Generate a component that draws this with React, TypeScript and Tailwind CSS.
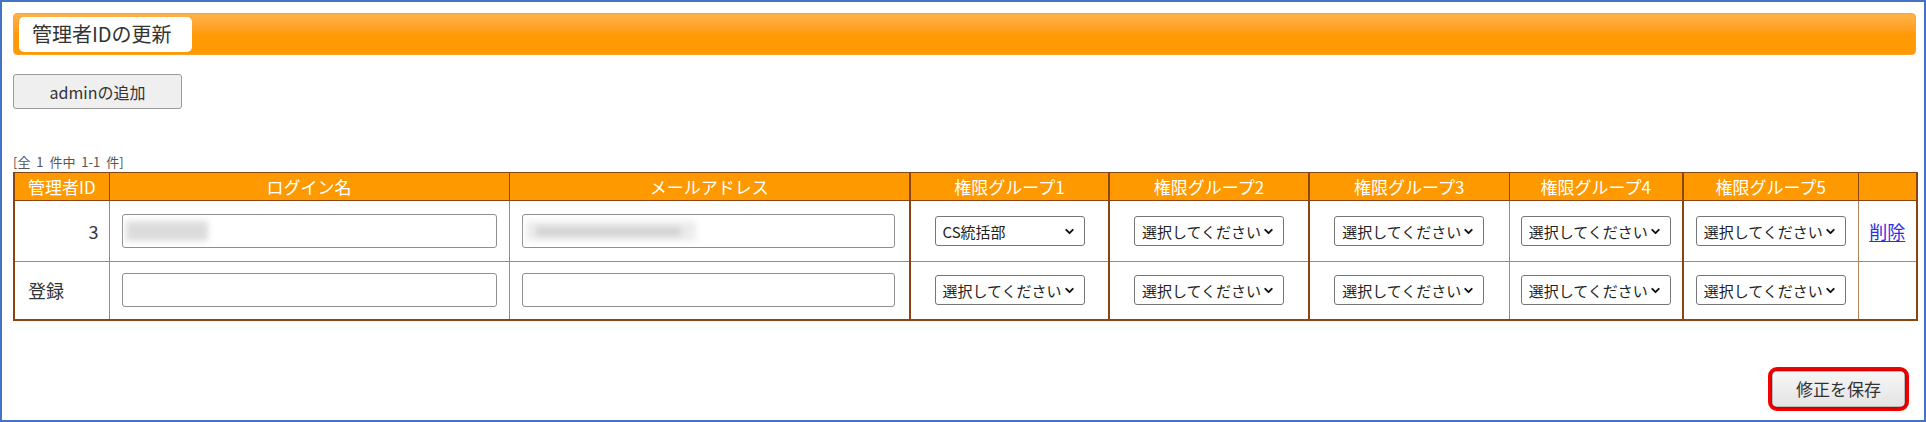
import { ChevronDown } from "lucide-react";

const FONT = "font-['Noto_Sans_CJK_JP','Noto_Sans',sans-serif]";

// column widths in px, left to right
const COLS = [95, 400, 401, 199, 200, 200, 174, 175, 59];

// columns whose left edge is drawn with the heavy rule
const HEAVY = [false, false, false, true, true, true, false, true, false];

const HEADERS = [
  "管理者ID",
  "ログイン名",
  "メールアドレス",
  "権限グループ1",
  "権限グループ2",
  "権限グループ3",
  "権限グループ4",
  "権限グループ5",
  "",
];

function GroupSelect({ value }: { value: string }) {
  return (
    <div className="mx-auto flex h-[30px] w-[150px] items-center justify-between rounded-[3px] border border-[#767676] bg-white pl-[7px] pr-[8px] text-[15px] leading-none text-[#222]">
      <span className="whitespace-nowrap">{value}</span>
      <ChevronDown className="h-[13px] w-[13px] shrink-0 text-[#111]" strokeWidth={3.5} />
    </div>
  );
}

function TextBox({ masked }: { masked?: "short" | "long" }) {
  return (
    <div className="flex h-[34px] w-full items-center rounded-[3px] border border-[#8f8f8f] bg-white px-[3px]">
      {masked === "short" && (
        <span className="h-[20px] w-[82px] bg-[#dcdcdc] blur-[3px]" />
      )}
      {masked === "long" && (
        <span className="flex h-[20px] w-[170px] items-center bg-[#ececec] blur-[3px]">
          <span className="ml-[10px] h-[9px] w-[145px] bg-[#d2d2d2]" />
        </span>
      )}
    </div>
  );
}

function cellBorder(i: number) {
  return HEAVY[i]
    ? "border border-[#b08563] border-l-2 border-l-[#8b4513]"
    : "border border-[#b08563]";
}

export default function App() {
  const groups1 = ["CS統括部", "選択してください", "選択してください", "選択してください", "選択してください"];
  const groups2 = ["選択してください", "選択してください", "選択してください", "選択してください", "選択してください"];

  return (
    <div
      className={`flex h-[422px] w-[1926px] flex-col border-2 border-[#4472c4] bg-white pl-[11px] pr-[8px] pt-[11px] text-[#333] ${FONT}`}
    >
      {/* page title bar */}
      <div className="flex h-[42px] items-center rounded-[4px] border border-[#ffa42a] bg-linear-to-b from-[#ffb347] via-[#ff9a08] to-[#ff9900] pl-[5px]">
        <div className="flex h-[35px] w-[173px] items-center rounded-[5px] bg-white pl-[13px] text-[20px] leading-none text-[#333]">
          管理者IDの更新
        </div>
      </div>

      <button className="mt-[19px] flex h-[35px] w-[169px] items-center justify-center rounded-[3px] border border-[#9a9a9a] bg-[#efefef] text-[16px] leading-none text-[#333]">
        adminの追加
      </button>

      <div className="mt-[44px] text-[13px] leading-[17px] text-[#555] [word-spacing:3px]">
        [全 1 件中 1-1 件]
      </div>

      <table className="mt-[2px] w-[1903px] table-fixed border-collapse border-2 border-t border-[#8b4513] border-t-[#a0522d]">
        <colgroup>
          {COLS.map((w, i) => (
            <col key={i} style={{ width: w }} />
          ))}
        </colgroup>
        <thead>
          <tr className="h-[28px] bg-[#ff9900]">
            {HEADERS.map((h, i) => (
              <th
                key={i}
                className={`border border-[#8b4513] ${HEAVY[i] ? "border-l-2" : ""} text-center text-[17px] font-normal leading-none text-white`}
              >
                {h}
              </th>
            ))}
          </tr>
        </thead>
        <tbody className="text-[18px] leading-none">
          <tr className="h-[61px]">
            <td className={`${cellBorder(0)} pr-[10px] text-right`}>3</td>
            <td className={`${cellBorder(1)} px-[12px]`}>
              <TextBox masked="short" />
            </td>
            <td className={`${cellBorder(2)} pl-[12px] pr-[14px]`}>
              <TextBox masked="long" />
            </td>
            {groups1.map((g, i) => (
              <td key={i} className={cellBorder(i + 3)}>
                <GroupSelect value={g} />
              </td>
            ))}
            <td className={`${cellBorder(8)} text-center`}>
              <a href="#" className="text-[#2f2fe0] underline underline-offset-2">
                削除
              </a>
            </td>
          </tr>
          <tr className="h-[58px]">
            <td className={`${cellBorder(0)} pl-[13px]`}>登録</td>
            <td className={`${cellBorder(1)} px-[12px]`}>
              <TextBox />
            </td>
            <td className={`${cellBorder(2)} pl-[12px] pr-[14px]`}>
              <TextBox />
            </td>
            {groups2.map((g, i) => (
              <td key={i} className={cellBorder(i + 3)}>
                <GroupSelect value={g} />
              </td>
            ))}
            <td className={cellBorder(8)} />
          </tr>
        </tbody>
      </table>

      {/* save button, outlined in red */}
      <div className="mt-[46px] flex justify-end pr-[7px]">
        <div className="rounded-[9px] border-[4px] border-[#ff0000] p-[1px]">
          <button className="flex h-[34px] w-[131px] items-center justify-center rounded-[3px] bg-linear-to-b from-[#f6f6f6] to-[#e4e4e4] text-[17px] leading-none text-[#333] shadow-[0_0_4px_1px_rgba(0,0,0,0.45)]">
            修正を保存
          </button>
        </div>
      </div>
    </div>
  );
}
